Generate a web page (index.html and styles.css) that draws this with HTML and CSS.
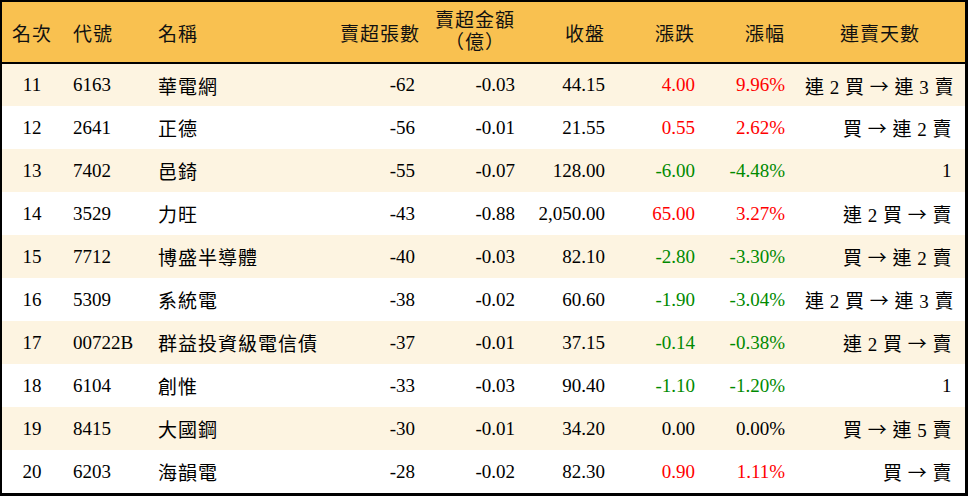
FILE: index.html
```html
<!DOCTYPE html>
<html lang="zh-Hant">
<head>
<meta charset="utf-8">
<link rel="stylesheet" href="styles.css">
</head>
<body>
<div class="frame">
<table class="grid">
<colgroup>
<col class="w-rank"><col class="w-code"><col class="w-name"><col class="w-vol"><col class="w-amt"><col class="w-close"><col class="w-chg"><col class="w-pct"><col class="w-days">
</colgroup>
<thead>
<tr>
<th class="c">名次</th>
<th class="l code">代號</th>
<th class="l name">名稱</th>
<th class="r">賣超張數</th>
<th class="r"><span class="two">賣超金額<br>（億）</span></th>
<th class="r">收盤</th>
<th class="r">漲跌</th>
<th class="r">漲幅</th>
<th class="c">連賣天數</th>
</tr>
</thead>
<tbody>
<tr class="alt"><td class="c">11</td><td class="l code">6163</td><td class="l name">華電網</td><td class="r">-62</td><td class="r">-0.03</td><td class="r">44.15</td><td class="r up">4.00</td><td class="r up">9.96%</td><td class="r days">連 2 買 <span class="arr">→</span> 連 3 賣</td></tr>
<tr><td class="c">12</td><td class="l code">2641</td><td class="l name">正德</td><td class="r">-56</td><td class="r">-0.01</td><td class="r">21.55</td><td class="r up">0.55</td><td class="r up">2.62%</td><td class="r days">買 <span class="arr">→</span> 連 2 賣</td></tr>
<tr class="alt"><td class="c">13</td><td class="l code">7402</td><td class="l name">邑錡</td><td class="r">-55</td><td class="r">-0.07</td><td class="r">128.00</td><td class="r down">-6.00</td><td class="r down">-4.48%</td><td class="r days">1</td></tr>
<tr><td class="c">14</td><td class="l code">3529</td><td class="l name">力旺</td><td class="r">-43</td><td class="r">-0.88</td><td class="r">2,050.00</td><td class="r up">65.00</td><td class="r up">3.27%</td><td class="r days">連 2 買 <span class="arr">→</span> 賣</td></tr>
<tr class="alt"><td class="c">15</td><td class="l code">7712</td><td class="l name">博盛半導體</td><td class="r">-40</td><td class="r">-0.03</td><td class="r">82.10</td><td class="r down">-2.80</td><td class="r down">-3.30%</td><td class="r days">買 <span class="arr">→</span> 連 2 賣</td></tr>
<tr><td class="c">16</td><td class="l code">5309</td><td class="l name">系統電</td><td class="r">-38</td><td class="r">-0.02</td><td class="r">60.60</td><td class="r down">-1.90</td><td class="r down">-3.04%</td><td class="r days">連 2 買 <span class="arr">→</span> 連 3 賣</td></tr>
<tr class="alt"><td class="c">17</td><td class="l code">00722B</td><td class="l name">群益投資級電信債</td><td class="r">-37</td><td class="r">-0.01</td><td class="r">37.15</td><td class="r down">-0.14</td><td class="r down">-0.38%</td><td class="r days">連 2 買 <span class="arr">→</span> 賣</td></tr>
<tr><td class="c">18</td><td class="l code">6104</td><td class="l name">創惟</td><td class="r">-33</td><td class="r">-0.03</td><td class="r">90.40</td><td class="r down">-1.10</td><td class="r down">-1.20%</td><td class="r days">1</td></tr>
<tr class="alt"><td class="c">19</td><td class="l code">8415</td><td class="l name">大國鋼</td><td class="r">-30</td><td class="r">-0.01</td><td class="r">34.20</td><td class="r">0.00</td><td class="r">0.00%</td><td class="r days">買 <span class="arr">→</span> 連 5 賣</td></tr>
<tr><td class="c">20</td><td class="l code">6203</td><td class="l name">海韻電</td><td class="r">-28</td><td class="r">-0.02</td><td class="r">82.30</td><td class="r up">0.90</td><td class="r up">1.11%</td><td class="r days">買 <span class="arr">→</span> 賣</td></tr>
</tbody>
</table>
</div>
</body>
</html>
```

FILE: styles.css
```css
html, body {
  margin: 0;
  padding: 0;
  background: #ffffff;
}

.frame {
  width: 963px;
  border-top: 2px solid #000;
  border-left: 2px solid #000;
  border-right: 3px solid #000;
  border-bottom: 3px solid #000;
}

.grid {
  width: 963px;
  border-collapse: collapse;
  table-layout: fixed;
  font-family: "Liberation Serif", "Noto Sans CJK TC", serif;
  font-size: 19px;
  color: #000;
}

.w-rank { width: 60px; }
.w-code { width: 86px; }
.w-name { width: 182px; }
.w-vol { width: 95px; }
.w-amt { width: 100px; }
.w-close { width: 90px; }
.w-chg { width: 90px; }
.w-pct { width: 90px; }
.w-days { width: 170px; }

.grid thead tr {
  height: 61px;
  background: #f9c150;
  border-bottom: 2px solid #000;
}

.grid th {
  font-weight: normal;
  letter-spacing: 1px;
  padding: 0 10px;
  vertical-align: middle;
  white-space: nowrap;
  color: #111;
}

.grid tbody tr {
  height: 43px;
  background: #ffffff;
}

.grid tbody tr.alt {
  background: #fdf4e1;
}

.grid td {
  padding: 0 10px;
  vertical-align: middle;
  white-space: nowrap;
}

.c { text-align: center; }
.l { text-align: left; }
.r { text-align: right; }

.grid .code { padding-left: 11px; }
.grid .name { padding-left: 10px; letter-spacing: 1px; }

.two {
  display: inline-block;
  text-align: center;
  line-height: 22px;
}

.grid td.days {
  padding-right: 13px;
  letter-spacing: 0.5px;
}

.arr {
  font-family: "Noto Sans CJK TC", sans-serif;
  font-size: 19px;
}

.up { color: #ff0000; }
.down { color: #008a00; }
```
